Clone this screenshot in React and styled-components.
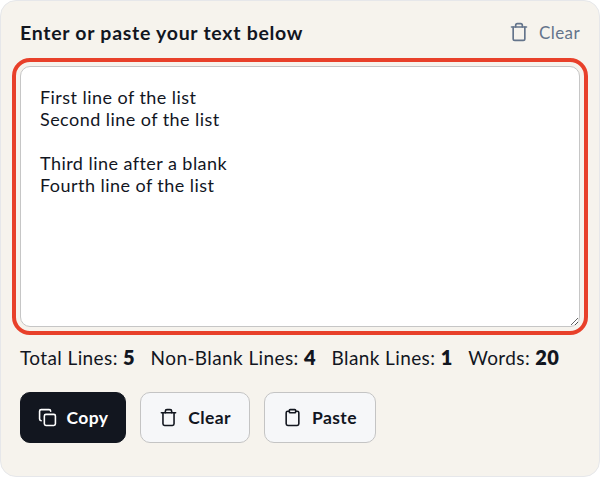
import React from "react";
import styled, { createGlobalStyle } from "styled-components";
import { Trash, Copy, Clipboard } from "lucide-react";

const SAMPLE_TEXT = `First line of the list
Second line of the list

Third line after a blank
Fourth line of the list`;

const STATS = [
  { label: "Total Lines:", value: 5 },
  { label: "Non-Blank Lines:", value: 4 },
  { label: "Blank Lines:", value: 1 },
  { label: "Words:", value: 20 }
];

const GlobalStyle = createGlobalStyle`
  html, body {
    margin: 0;
    padding: 0;
    background: #fff;
  }
  * {
    box-sizing: border-box;
  }
  body {
    font-family: "Lato", "Noto Sans", sans-serif;
    color: #12161f;
  }
`;

const Card = styled.div`
  width: 600px;
  height: 477px;
  padding: 19px;
  background: #f6f3ed;
  border: 1px solid #e6e7ea;
  border-radius: 16px;
`;

const Header = styled.div`
  display: flex;
  justify-content: space-between;
  align-items: center;
  height: 24px;
`;

const Title = styled.h2`
  margin: 0;
  font-size: 19.5px;
  font-weight: 700;
  letter-spacing: 0.72px;
  color: #12161f;
`;

const GhostButton = styled.button`
  display: flex;
  align-items: center;
  gap: 10px;
  padding: 0;
  border: 0;
  background: none;
  font: inherit;
  font-size: 17px;
  letter-spacing: 0.4px;
  color: #64748b;
`;

const TextBox = styled.textarea`
  display: block;
  width: 560px;
  height: 261px;
  margin-top: 22px;
  padding: 19px 19px;
  font-family: inherit;
  font-size: 18px;
  line-height: 22px;
  letter-spacing: 0.45px;
  color: #12161f;
  background: #fff;
  border: 1.5px solid #c6c6c6;
  border-radius: 10px;
  outline: 4px solid #e8402a;
  outline-offset: 4px;
  resize: vertical;
`;

const Stats = styled.div`
  display: flex;
  gap: 15.5px;
  margin-top: 18px;
  font-size: 19px;
  line-height: 24px;
  letter-spacing: 0.4px;
`;

const Value = styled.strong`
  font-size: 20px;
  font-weight: 800;
`;

const Actions = styled.div`
  display: flex;
  gap: 14px;
  margin-top: 22px;
`;

const ActionButton = styled.button`
  display: flex;
  align-items: center;
  justify-content: center;
  gap: 10px;
  width: ${props => props.$width}px;
  height: 51px;
  padding: 0;
  font: inherit;
  font-size: 17.5px;
  font-weight: 700;
  letter-spacing: 0.4px;
  color: ${props => (props.$primary ? "#fff" : "#12161f")};
  background: ${props => (props.$primary ? "#12161f" : "#f6f7f9")};
  border: 1px solid ${props => (props.$primary ? "#12161f" : "#c4c4c4")};
  border-radius: 10px;
`;

export default function App() {
  return (
    <Card>
      <GlobalStyle />
      <Header>
        <Title>Enter or paste your text below</Title>
        <GhostButton>
          <Trash size={20} strokeWidth={2} />
          Clear
        </GhostButton>
      </Header>
      <TextBox readOnly defaultValue={SAMPLE_TEXT} />
      <Stats>
        {STATS.map(stat => (
          <span key={stat.label}>
            {stat.label} <Value>{stat.value}</Value>
          </span>
        ))}
      </Stats>
      <Actions>
        <ActionButton $primary $width={106}>
          <Copy size={19} strokeWidth={2} />
          Copy
        </ActionButton>
        <ActionButton $width={110}>
          <Trash size={19} strokeWidth={2} />
          Clear
        </ActionButton>
        <ActionButton $width={112}>
          <Clipboard size={19} strokeWidth={2} />
          Paste
        </ActionButton>
      </Actions>
    </Card>
  );
}
